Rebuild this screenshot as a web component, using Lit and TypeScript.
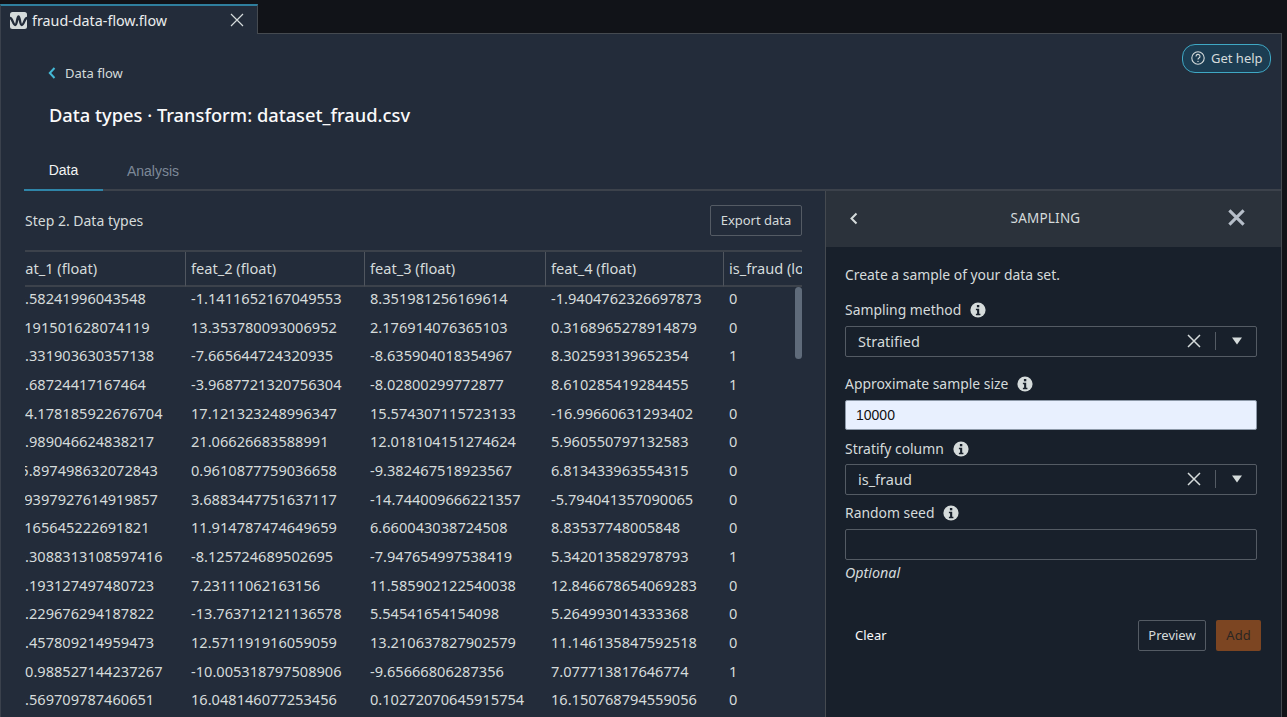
import { LitElement, html, css, svg } from "lit";
import { customElement } from "lit/decorators.js";

const ROWS: string[][] = [
  ["-9.58241996043548", "-1.1411652167049553", "8.351981256169614", "-1.9404762326697873", "0"],
  ["8.191501628074119", "13.353780093006952", "2.176914076365103", "0.3168965278914879", "0"],
  ["-9.331903630357138", "-7.665644724320935", "-8.635904018354967", "8.302593139652354", "1"],
  ["-9.68724417167464", "-3.9687721320756304", "-8.02800299772877", "8.610285419284455", "1"],
  ["-14.178185922676704", "17.121323248996347", "15.574307115723133", "-16.99660631293402", "0"],
  ["-8.989046624838217", "21.06626683588991", "12.018104151274624", "5.960550797132583", "0"],
  ["15.897498632072843", "0.9610877759036658", "-9.382467518923567", "6.813433963554315", "0"],
  ["8.9397927614919857", "3.6883447751637117", "-14.744009666221357", "-5.794041357090065", "0"],
  ["7.165645222691821", "11.914787474649659", "6.660043038724508", "8.83537748005848", "0"],
  ["-9.3088313108597416", "-8.125724689502695", "-7.947654997538419", "5.342013582978793", "1"],
  ["-9.193127497480723", "7.23111062163156", "11.585902122540038", "12.846678654069283", "0"],
  ["-9.229676294187822", "-13.763712121136578", "5.54541654154098", "5.264993014333368", "0"],
  ["-9.457809214959473", "12.571191916059059", "13.210637827902579", "11.146135847592518", "0"],
  ["-10.988527144237267", "-10.005318797508906", "-9.65666806287356", "7.077713817646774", "1"],
  ["-9.569709787460651", "16.048146077253456", "0.10272070645915754", "16.150768794559056", "0"],
];

const HEADS = ["feat_1 (float)", "feat_2 (float)", "feat_3 (float)", "feat_4 (float)", "is_fraud (long)"];

const infoIcon = svg`<svg class="info" viewBox="0 0 16 16" width="16" height="16"><circle cx="8" cy="8" r="7.6" fill="#d5dbdb"/><rect x="6.9" y="3" width="2.4" height="2.3" fill="#18202b"/><path d="M5.9 6.8h3.3v5h1.2v1.4H5.9v-1.4h1.2V8.2H5.9z" fill="#18202b"/></svg>`;

@customElement("app-root")
export class AppRoot extends LitElement {
  static styles = css`
    :host {
      display: block;
      height: 717px;
      overflow: hidden;
      background: #111318;
      font-family: "Noto Sans", "Open Sans", sans-serif;
      color: #d5dbdb;
      font-size: 14px;
    }
    * { box-sizing: border-box; }
    .frame { width: 1282px; height: 717px; display: flex; flex-direction: column; }
    .topbar { height: 34px; padding-top: 4px; display: flex; flex: none; }
    .tab {
      width: 258px;
      background: #232c3a;
      border-top: 2px solid #2f7f9e;
      border-right: 1px solid #454a50;
      border-left: 1px solid #3a414c;
      display: flex;
      align-items: center;
      padding: 0 12px 0 9px;
      gap: 5px;
      color: #eaeded;
      font-size: 14.3px;
    }
    .tab .name { flex: 1; }
    .topfill { flex: 1; border-bottom: 1px solid #454a50; }
    .page {
      flex: 1;
      min-height: 0;
      background: #232c3a;
      border-left: 1px solid #3a414c;
      border-right: 1px solid #454a50;
      display: flex;
      flex-direction: column;
    }
    .head { height: 118px; flex: none; display: flex; justify-content: space-between; padding: 10px 10px 0 48px; }
    .crumb { display: flex; align-items: center; gap: 9px; height: 20px; margin: 19px 0 0 -1px; font-size: 13px; color: #d5dbdb; }
    .title { margin-top: 18px; font-size: 18.3px; font-weight: 500; color: #fafafa; line-height: 28px; }
    .help {
      height: 29px;
      width: 89px;
      border: 1px solid #3fa8c4;
      border-radius: 13px;
      background: #1c3d52;
      display: flex;
      align-items: center;
      gap: 6px;
      padding: 0 0 1px 8px;
      font-size: 13px;
      color: #d5dbdb;
    }
    .tabs { height: 39px; flex: none; margin-left: 23px; display: flex; border-bottom: 2px solid #3c424b; font-family: "Liberation Sans", sans-serif; }
    .t { height: 39px; display: flex; align-items: center; justify-content: center; padding-bottom: 2px; font-size: 14px; }
    .t.on { width: 79px; color: #f2f3f3; border-bottom: 2px solid #2f85a8; }
    .t.off { width: 100px; color: #7d8998; }
    .body { flex: 1; min-height: 0; display: flex; }
    .left { width: 825px; flex: none; border-right: 1px solid #454a50; padding: 13px 23px 0 24px; display: flex; flex-direction: column; min-height: 0; }
    .lefthead { display: flex; justify-content: space-between; align-items: center; height: 32px; margin-bottom: 14px; font-size: 14px; color: #d5dbdb; }
    .btn {
      border: 1px solid #545b64;
      border-radius: 2px;
      display: flex;
      align-items: center;
      justify-content: center;
      font-size: 13px;
      color: #d5dbdb;
    }
    .export { width: 92px; height: 31px; }
    .tablewrap { position: relative; overflow: hidden; flex: 1; min-height: 0; border-top: 2px solid #3c424b; }
    .table { margin-left: -18px; display: grid; grid-template-columns: 179px 179px 181px 178px 180px; }
    .th {
      height: 35px;
      display: flex;
      align-items: center;
      padding: 0 0 2px 5px;
      border-right: 1px solid #50565f;
      border-bottom: 2px solid #3c424b;
      font-size: 14.6px;
      color: #d5dbdb;
      white-space: nowrap;
    }
    .td {
      height: 28.67px;
      padding: 0 0 0 5px;
      font-size: 14.6px;
      line-height: 22.4px;
      color: #d5dbdb;
      white-space: nowrap;
      overflow: hidden;
    }
    .scroll { position: absolute; right: 0; top: 35px; width: 7px; height: 72px; border-radius: 4px; background: #5f6b7a; }
    .panel { flex: 1; background: #18202b; min-width: 0; }
    .phead {
      height: 56px;
      background: #2b323b;
      display: flex;
      align-items: center;
      justify-content: space-between;
      padding: 0 35px 2px 23px;
      font-size: 13.5px;
      color: #d5dbdb;
      letter-spacing: 0.2px;
    }
    .phead span { margin-left: 6px; }
    .phead svg:last-child { margin-bottom: 1px; }
    .pform { padding: 18px 24px 0 19px; display: flex; flex-direction: column; }
    .desc { height: 20px; line-height: 20px; font-size: 13.9px; margin-bottom: 5px; }
    .label { display: flex; align-items: center; gap: 9px; height: 20px; font-size: 13.9px; line-height: 20px; }
    .label.sm { margin: 10px 0 6px; }
    .label.ap { margin: 17px 0 6px; }
    .label.st { margin: 9px 0 5px; }
    .label.rs { margin: 8px 0 6px; }
    .select {
      height: 31px;
      border: 1px solid #545b64;
      border-radius: 2px;
      display: flex;
      align-items: center;
      padding: 0 13px 1px 12px;
      font-size: 14.5px;
    }
    .select .v { flex: 1; }
    .divider { width: 1px; height: 18px; background: #545b64; margin: 0 15px 0 13px; }
    .input { height: 31px; border: 1px solid #545b64; border-radius: 2px; }
    .input.filled {
      height: 30px;
      background: #e8f0fe;
      border-color: #8d99a8;
      color: #111;
      font-family: "Liberation Sans", sans-serif;
      font-size: 14px;
      display: flex;
      align-items: center;
      padding-left: 10px;
    }
    .opt { font-style: italic; font-size: 14.3px; height: 20px; line-height: 20px; margin-top: 3px; color: #d5dbdb; }
    .actions { display: flex; align-items: center; margin-top: 37px; width: 416px; }
    .clear { font-size: 13px; color: #fafafa; margin-left: 10px; flex: 1; padding-bottom: 2px; }
    .preview { width: 68px; height: 31px; padding-bottom: 1px; }
    .add { width: 45px; height: 31px; margin-left: 10px; background: #7c4522; border: none; color: #2b2622; padding-bottom: 1px; }
  `;

  private x(size: number, color: string, w: number) {
    return svg`<svg width=${size} height=${size} viewBox="0 0 16 16"><path d="M2 2l12 12M14 2L2 14" stroke=${color} stroke-width=${w} fill="none"/></svg>`;
  }

  private select(v: string) {
    return html`<div class="select">
      <span class="v">${v}</span>
      ${this.x(16, "#d5dbdb", 1.5)}
      <span class="divider"></span>
      <svg width="12" height="8" viewBox="0 0 12 8"><path d="M1 0.5h10L6 7.5z" fill="#d5dbdb"/></svg>
    </div>`;
  }

  render() {
    return html`<div class="frame">
      <div class="topbar">
        <div class="tab">
          <svg width="17" height="17" viewBox="0 0 17 17">
            <rect width="17" height="17" rx="2.5" fill="#d5dbdb"/>
            <path d="M0 6C2.5 6 3 13 5.2 13C7.2 13 7 4.5 8.5 4.5C10 4.5 9.8 13 11.8 13C14 13 14.5 6 17 6" stroke="#232c3a" stroke-width="2.4" fill="none"/>
          </svg>
          <span class="name">fraud-data-flow.flow</span>
          ${this.x(16, "#d5dbdb", 1.2)}
        </div>
        <div class="topfill"></div>
      </div>
      <div class="page">
        <div class="head">
          <div>
            <div class="crumb">
              <svg width="8" height="12" viewBox="0 0 8 12"><path d="M6.5 1L1.8 6l4.7 5" stroke="#44b9d6" stroke-width="2" fill="none"/></svg>
              <span>Data flow</span>
            </div>
            <div class="title">Data types · Transform: dataset_fraud.csv</div>
          </div>
          <div class="help">
            <svg width="14" height="14" viewBox="0 0 14 14"><circle cx="7" cy="7" r="6.2" stroke="#d5dbdb" stroke-width="1.1" fill="none"/><path d="M5 5.4a2 2 0 1 1 3 1.7c-.7.4-1 .8-1 1.5" stroke="#d5dbdb" stroke-width="1.1" fill="none"/><circle cx="7" cy="10.4" r=".7" fill="#d5dbdb"/></svg>
            <span>Get help</span>
          </div>
        </div>
        <div class="tabs">
          <div class="t on">Data</div>
          <div class="t off">Analysis</div>
        </div>
        <div class="body">
          <div class="left">
            <div class="lefthead">
              <span>Step 2. Data types</span>
              <div class="btn export">Export data</div>
            </div>
            <div class="tablewrap">
              <div class="table">
                ${HEADS.map((h) => html`<div class="th">${h}</div>`)}
                ${ROWS.map((r) => r.map((c) => html`<div class="td">${c}</div>`))}
              </div>
              <div class="scroll"></div>
            </div>
          </div>
          <div class="panel">
            <div class="phead">
              <svg width="9" height="13" viewBox="0 0 9 13"><path d="M7.5 1.5L2.5 6.5l5 5" stroke="#d5dbdb" stroke-width="2" fill="none"/></svg>
              <span>SAMPLING</span>
              ${this.x(19, "#b6bec9", 2.6)}
            </div>
            <div class="pform">
              <div class="desc">Create a sample of your data set.</div>
              <div class="label sm">Sampling method ${infoIcon}</div>
              ${this.select("Stratified")}
              <div class="label ap">Approximate sample size ${infoIcon}</div>
              <div class="input filled">10000</div>
              <div class="label st">Stratify column ${infoIcon}</div>
              ${this.select("is_fraud")}
              <div class="label rs">Random seed ${infoIcon}</div>
              <div class="input"></div>
              <div class="opt">Optional</div>
              <div class="actions">
                <span class="clear">Clear</span>
                <div class="btn preview">Preview</div>
                <div class="btn add">Add</div>
              </div>
            </div>
          </div>
        </div>
      </div>
    </div>`;
  }
}
